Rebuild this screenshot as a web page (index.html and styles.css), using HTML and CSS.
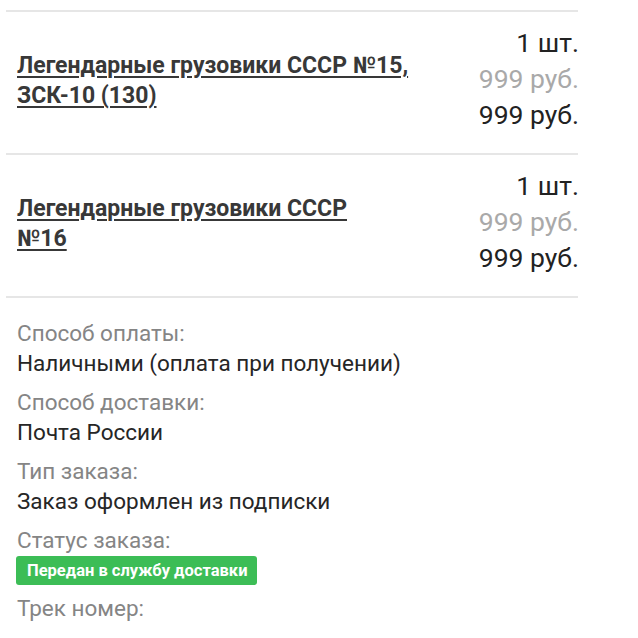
FILE: index.html
```html
<!DOCTYPE html>
<html lang="ru">
<head>
<meta charset="utf-8">
<link rel="stylesheet" href="styles.css">
</head>
<body>
<div class="order">
  <div class="item">
    <a class="title" href="#">Легендарные грузовики СССР №15, ЗСК-10 (130)</a>
    <div class="prices">
      <div class="qty">1 шт.</div>
      <div class="old">999 руб.</div>
      <div class="sum">999 руб.</div>
    </div>
  </div>
  <div class="item">
    <a class="title" href="#">Легендарные грузовики СССР<br>№16</a>
    <div class="prices">
      <div class="qty">1 шт.</div>
      <div class="old">999 руб.</div>
      <div class="sum">999 руб.</div>
    </div>
  </div>
  <div class="info">
    <div class="group">
      <div class="label">Способ оплаты:</div>
      <div class="value">Наличными (оплата при получении)</div>
    </div>
    <div class="group">
      <div class="label">Способ доставки:</div>
      <div class="value">Почта России</div>
    </div>
    <div class="group">
      <div class="label">Тип заказа:</div>
      <div class="value">Заказ оформлен из подписки</div>
    </div>
    <div class="group status">
      <div class="label">Статус заказа:</div>
      <div class="badge">Передан в службу доставки</div>
    </div>
    <div class="group">
      <div class="label">Трек номер:</div>
    </div>
  </div>
</div>
</body>
</html>
```
FILE: styles.css
```css
html, body {
  margin: 0;
  padding: 0;
  background: #ffffff;
}
body {
  font-family: Roboto, "Noto Sans", sans-serif;
  color: #222;
}
.order {
  margin: 10px 0 0 6px;
  width: 572px;
  border-top: 2px solid #e6e6e6;
}
.item {
  display: flex;
  justify-content: space-between;
  align-items: center;
  padding: 13px 0 20px 11px;
  border-bottom: 2px solid #e6e6e6;
}
.title {
  font-size: 23px;
  font-weight: 700;
  line-height: 30px;
  color: #383838;
  text-decoration: underline;
  text-decoration-thickness: 2px;
  text-underline-offset: 3px;
  padding-top: 4px;
  max-width: 430px;
}
.prices {
  text-align: right;
  font-size: 26.5px;
  line-height: 36px;
  margin-right: -1px;
}
.qty, .sum {
  color: #222;
}
.old {
  color: #a9a9a9;
}
.info {
  padding: 20px 0 0 11px;
}
.group {
  margin-bottom: 9px;
}
.label {
  font-size: 22.5px;
  line-height: 30px;
  color: #858585;
}
.value {
  font-size: 22.5px;
  line-height: 30px;
  color: #262626;
}
.status {
  margin-bottom: 8px;
}
.badge {
  display: inline-block;
  margin: 1px 0 0 -1px;
  background: #3cbd56;
  color: #ffffff;
  font-weight: 700;
  font-size: 16.5px;
  line-height: 29px;
  padding: 0 9px 0 11px;
  border-radius: 3px;
}
```
